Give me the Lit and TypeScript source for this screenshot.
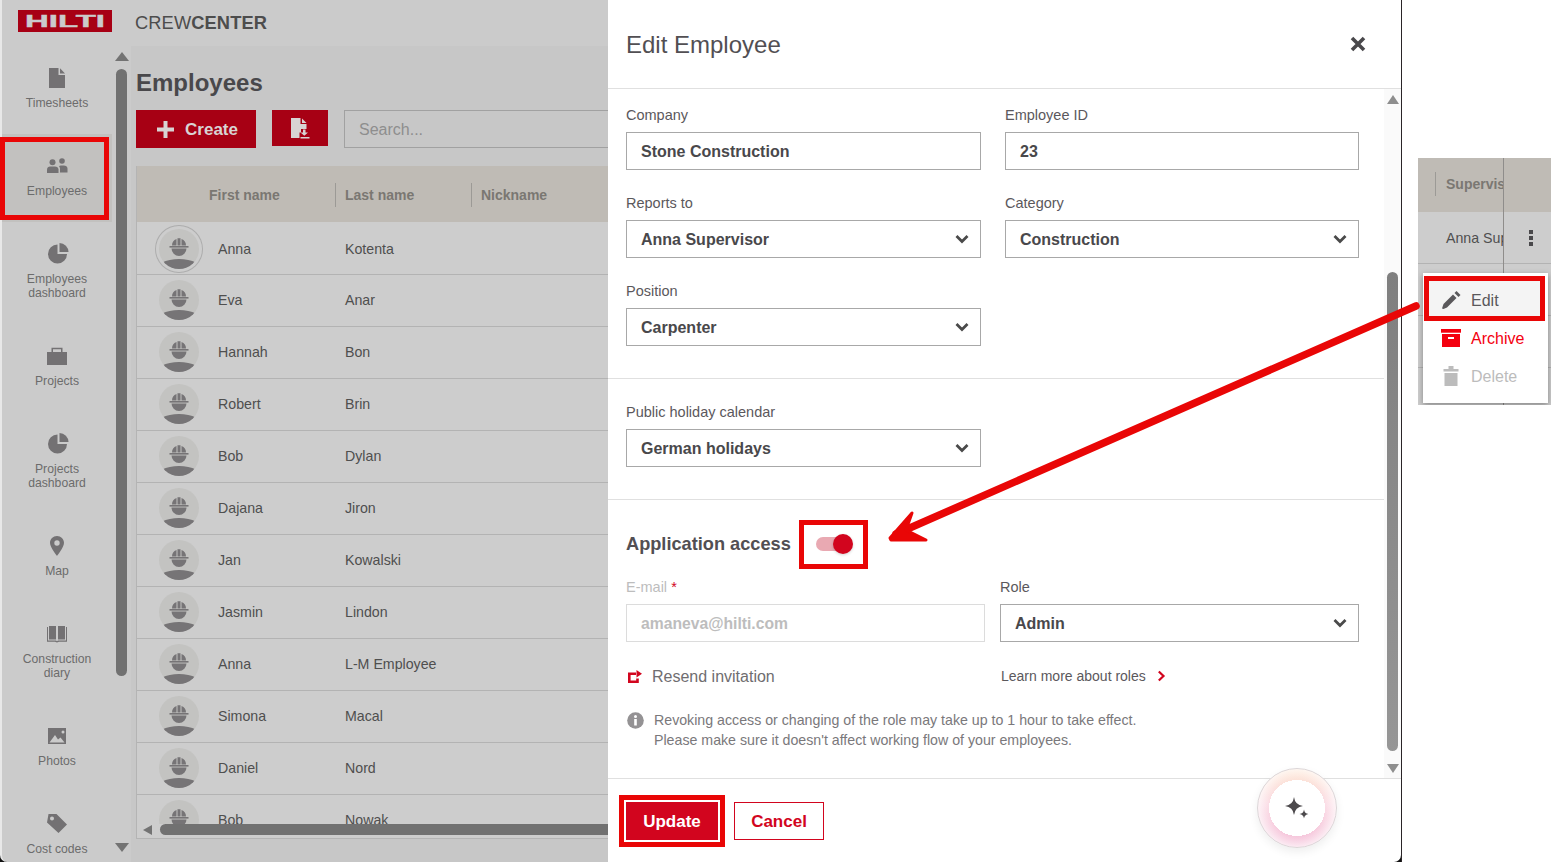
import { LitElement, html, css, svg } from "lit";
import { customElement } from "lit/decorators.js";

const pie = svg`<path d="M12.500 2.500A9.500 9.500 0 1 0 22 12h-9.500z"/><path d="M14.500 1v9h9a9 9 0 0 0-9-9z"/>`;
const icons: Record<string, unknown> = {
  file: svg`<path d="M4 2h9.500v7H20v13H4z"/><path d="M15 2.200 20 7.500h-5z"/>`,
  people: svg`<circle cx="7.500" cy="8.300" r="3"/><circle cx="17" cy="7" r="2.800"/><path d="M2 19v-3.500c0-1.800 1.500-3 3-3h5c1.800 0 3.500 1.200 3.500 3V19z"/><path d="M15 18.500v-3.700c0-1-.4-2-1-2.600.4-.4 1-.7 1.800-.7h3c2 0 3.700 1.200 3.700 3v4z"/>`,
  pie,
  case: svg`<path d="M8 8V5.200h8V8h1.500V3.800h-11V8z"/><rect x="2" y="8" width="20" height="13"/>`,
  pin: svg`<path fill-rule="evenodd" d="M12 2c-3.900 0-7 3-7 6.800C5 13.500 12 22 12 22s7-8.500 7-13.200C19 5 15.900 2 12 2zm0 4.300a2.700 2.700 0 1 1 0 5.400 2.700 2.700 0 0 1 0-5.400z"/>`,
  book: svg`<path d="M4 4h7v13.500H4z"/><path d="M13 4h7v13.500h-7z"/><path d="M2 5h1v13.500h8l1 .8 1-.8h8V5h1v14.800h-8l-2 .7-2-.7H2z"/>`,
  photo: svg`<path fill-rule="evenodd" d="M3 4h18v16H3zM18 6.500a1.500 1.500 0 1 0 0 3 1.500 1.500 0 0 0 0-3zM4.500 18.500h15l-4-5-2.500 2-3-4.500z"/>`,
  tag: svg`<path fill-rule="evenodd" d="M3.500 2h8L22 12.500 13.500 21 2 10.500zM7 4.500a2 2 0 1 0 0 4 2 2 0 0 0 0-4z"/>`,
};

const nav = [
  { icon: "file", label: ["Timesheets"] },
  { icon: "people", label: ["Employees"], active: true },
  { icon: "pie", label: ["Employees", "dashboard"] },
  { icon: "case", label: ["Projects"] },
  { icon: "pie", label: ["Projects", "dashboard"] },
  { icon: "pin", label: ["Map"] },
  { icon: "book", label: ["Construction", "diary"] },
  { icon: "photo", label: ["Photos"] },
  { icon: "tag", label: ["Cost codes"] },
];

const people = [
  ["Anna", "Kotenta"], ["Eva", "Anar"], ["Hannah", "Bon"], ["Robert", "Brin"],
  ["Bob", "Dylan"], ["Dajana", "Jiron"], ["Jan", "Kowalski"], ["Jasmin", "Lindon"],
  ["Anna", "L-M Employee"], ["Simona", "Macal"], ["Daniel", "Nord"], ["Bob", "Nowak"],
];

const chevron = html`<svg class="chev" viewBox="0 0 14 10" width="14" height="10"><path d="M1.500 2 7 7.500 12.500 2" fill="none" stroke="#4a4a4a" stroke-width="2.800"/></svg>`;

@customElement("app-root")
export class AppRoot extends LitElement {
  static styles = css`
    :host { display: block; width: 1551px; height: 862px; position: relative; overflow: hidden; background: #fff;
      font-family: "Liberation Sans", Arial, sans-serif; color: #524f53; }
    * { box-sizing: border-box; }
    .stage { display: flex; width: 1551px; height: 862px; }
    .window { display: flex; width: 1402px; height: 862px; background: #111; border-right: 1px solid #2a2528; }

    .left { width: 608px; height: 862px; overflow: hidden; background: #cbcbcb; border-left: 2px solid #e8e8e8; border-bottom-left-radius: 7px; display: flex; flex-direction: column; color: #4b4b4b; }
    .top { height: 46px; flex: none; display: flex; align-items: center; padding-left: 16px; }
    .logo { width: 94px; height: 22px; display: block; margin-top: -4px; }
    .logo-text { font-weight: 700; font-size: 16.5px; fill: #cbcbcb; stroke: #cbcbcb; stroke-width: .4px; }
    .brand { margin-left: 23px; font-size: 18.300px; color: #4d4d4d; margin-top: -1px; letter-spacing: .1px; }
    .brand b { font-weight: 700; }
    .under { flex: 1; display: flex; min-height: 0; }
    .side { width: 110px; flex: none; overflow: hidden; }
    .item { height: 88px; padding-top: 20px; display: flex; flex-direction: column; align-items: center; font-size: 12.200px; line-height: 14px; color: #6c6c6c; text-align: center; }
    .item.two { height: 102px; }
    .item.on { background: #c2c1bf; }
    .item svg { width: 24px; height: 24px; margin-bottom: 6px; fill: #737173; flex: none; }
    .sb { width: 19px; flex: none; display: flex; flex-direction: column; align-items: center; padding: 6px 0 0 0; }
    .tri-up { width: 0; height: 0; border-left: 7px solid transparent; border-right: 7px solid transparent; border-bottom: 9px solid #737373; }
    .tri-down { width: 0; height: 0; border-left: 7px solid transparent; border-right: 7px solid transparent; border-top: 9px solid #737373; }
    .sb-thumb { width: 11px; height: 607px; margin-top: 8px; background: #717171; border-radius: 6px; }
    .sb .tri-down { margin-top: 167px; }
    .main { flex: 1; min-width: 0; background: #c7c7c7; padding: 23px 0 0 5px; }
    h1 { margin: 0; font-size: 24px; line-height: 28px; font-weight: 700; color: #49484b; }
    .tools { display: flex; align-items: flex-start; margin-top: 13px; height: 38px; }
    .create { width: 120px; height: 38px; flex: none; background: #a70014; color: #d8d3d3; font-weight: 700; font-size: 17px; display: flex; align-items: center; justify-content: center; gap: 11px; padding: 1px 0 0 3px; }
    .create svg { margin-top: -1px; }
    .imp { width: 56px; height: 36px; flex: none; margin-left: 16px; background: #a70014; display: flex; align-items: center; justify-content: center; }
    .search { width: 280px; height: 38px; margin-left: 16px; border: 1px solid #a1a1a1; flex: none; font-size: 16px; color: #8e8e8e; padding: 1px 14px 0; display: flex; align-items: center; }
    .table { position: relative; margin-top: 18px; height: 673px; width: 472px; overflow: hidden; border-left: 1px solid #b4b4b4; border-bottom: 1px solid #b4b4b4; background: #cdcdcd; }
    .thead { height: 56px; padding-top: 2px; background: #bfbbb5; display: grid; grid-template-columns: 198px 136px 136px; font-weight: 700; font-size: 14px; color: #7a7772; align-items: center; }
    .thead span { height: 24px; line-height: 24px; padding-left: 9px; border-left: 1px solid #9c9a96; }
    .thead span:first-child { padding-left: 72px; border: 0; }
    .trow { height: 52px; box-shadow: 0 1px 0 #b3b3b3; display: grid; grid-template-columns: 198px 136px; align-items: center; font-size: 14.200px; color: #4f4f4f; }
    .trow.first { padding-top: 2px; }
    .cell1 { display: flex; align-items: center; padding-left: 22px; gap: 19px; }
    .cell2 { padding-left: 10px; }
    .av { width: 40px; height: 40px; border-radius: 50%; background: #c3c3c1; flex: none; overflow: hidden; }
    .av svg { display: block; width: 40px; height: 40px; fill: #767476; }
    .ring { box-shadow: 0 0 0 3px #cdcdcd, 0 0 0 4px #adadad; }
    .hs { position: absolute; left: 0; right: 0; bottom: 0; height: 14px; background: #cdcdcd; }
    .hs-tri { position: absolute; left: 6px; top: 1px; width: 0; height: 0; border-top: 5.500px solid transparent; border-bottom: 5.500px solid transparent; border-right: 9px solid #737373; }
    .hs-thumb { position: absolute; left: 23px; top: 0; width: 500px; height: 11px; background: #717171; border-radius: 6px; }

    .panel { width: 793px; height: 862px; background: #fff; border-bottom-right-radius: 7px; display: flex; flex-direction: column; overflow: hidden; }
    .phead { height: 89px; flex: none; border-bottom: 1px solid #e0e0e0; display: flex; align-items: center; justify-content: space-between; padding: 2px 35px 0 18px; }
    .phead h2 { margin: 0; font-weight: 400; font-size: 24px; color: #524f53; }
    .close { width: 16px; height: 16px; display: block; margin-top: -2px; }
    .pbody { flex: 1; min-height: 0; display: flex; }
    .form { width: 776px; flex: none; }
    .sec { padding: 17px 0 32px 18px; border-bottom: 1px solid #e0e0e0; }
    .sec + .sec { padding-top: 24px; }
    .sec.last { border: 0; padding-top: 32px; }
    .grid { display: grid; grid-template-columns: 355px 354px; column-gap: 24px; row-gap: 24px; }
    .grid2 { display: grid; grid-template-columns: 359px 359px; column-gap: 15px; margin-top: 22px; }
    label, .lab { display: block; font-size: 14.500px; line-height: 18px; color: #5b585c; margin-bottom: 8px; }
    .lab.off { color: #bdbdbd; }
    .lab i { color: #d2051e; font-style: normal; }
    .box { height: 38px; border: 1px solid #a8a8a8; padding: 1px 15px 0 14px; font-weight: 700; font-size: 16px; color: #49484b; display: flex; align-items: center; justify-content: space-between; }
    .box.off { border-color: #dcdcdc; color: #bdbdbd; font-size: 15.700px; }
    .chev { flex: none; margin: -1px -4px 0 0; }
    .access { display: flex; align-items: center; height: 24px; font-size: 18.200px; font-weight: 700; color: #524f53; }
    .tog { position: relative; width: 32px; height: 14px; margin-left: 25px; background: #e9a9b2; border-radius: 7px; }
    .knob { position: absolute; right: -5px; top: -3px; width: 20px; height: 20px; border-radius: 50%; background: #d2051e; box-shadow: 0 1px 3px rgba(0,0,0,.18); }
    .links { display: grid; grid-template-columns: 359px 359px; column-gap: 15px; margin-top: 23px; height: 24px; align-items: center; }
    .resend { display: flex; align-items: center; gap: 10px; font-size: 16px; color: #6f6d70; padding-left: 2px; }
    .learn { display: flex; align-items: center; gap: 11px; font-size: 14px; color: #5b585c; padding: 0 0 2px 1px; }
    .note { display: flex; margin-top: 21px; gap: 10px; font-size: 14.200px; line-height: 20px; color: #7a787b; padding-left: 1px; }
    .note svg { flex: none; margin-top: 2px; }
    .vsb { flex: 1; background: #fafafa; display: flex; flex-direction: column; align-items: center; padding-top: 6px; }
    .vsb .tri-up, .vsb .tri-down { border-left-width: 6.500px; border-right-width: 6.500px; }
    .vsb .tri-up { border-bottom-color: #8e8e8e; }
    .vsb .tri-down { border-top-color: #8e8e8e; margin-top: 13px; }
    .vthumb { width: 11px; height: 479px; margin-top: 168px; border-radius: 6px; background: linear-gradient(#7f7f7f, #969696); }
    .pfoot { height: 84px; flex: none; border-top: 1px solid #e0e0e0; display: flex; align-items: flex-start; padding: 23px 0 0 18px; position: relative; }
    .btn { height: 38px; font-size: 17px; font-weight: 700; display: flex; align-items: center; justify-content: center; padding-top: 1px; }
    .update { width: 92px; background: #d2051e; color: #fff; }
    .cancel { width: 90px; margin-left: 16px; border: 1px solid #d2051e; color: #d2051e; }
    .fab { position: absolute; left: 649px; top: -11px; width: 80px; height: 80px; border-radius: 50%; border: 1px solid #dcd6d8; background:
        radial-gradient(circle at 50% 50%, #fff 0 28px, transparent 28px),
        radial-gradient(circle at 50% 50%, transparent 28px, rgba(255,255,255,.75) 40px),
        linear-gradient(#fde4d2, #fbdde6 45%, #f4bfd8);
      box-shadow: 0 4px 10px rgba(0,0,0,.07); display: flex; align-items: center; justify-content: center; }

    .right { flex: 1; padding: 158px 0 0 16px; }
    .rt { width: 133px; height: 247px; background: #cdcdcd; position: relative; overflow: hidden; }
    .rhead { height: 54px; background: #bfbbb5; display: flex; align-items: center; padding: 0 0 2px 17px; }
    .rhead span { width: 68px; height: 24px; line-height: 24px; padding-left: 10px; border-left: 1px solid #9c9a96; font-weight: 700; font-size: 14px; color: #7a7772; overflow: hidden; white-space: nowrap; flex: none; }
    .rrow { height: 52px; border-bottom: 1px solid #b3b3b3; display: flex; align-items: center; font-size: 14.200px; color: #4f4f4f; }
    .rname { width: 85px; padding-left: 28px; overflow: hidden; white-space: nowrap; flex: none; }
    .kebab { margin-left: 26px; display: flex; flex-direction: column; gap: 2px; }
    .kebab b { width: 4px; height: 4px; background: #49484b; display: block; }
    .vline { position: absolute; left: 85px; top: 0; bottom: 0; width: 1px; background: #8f8d8b; }
    .menu { position: absolute; left: 5px; top: 115px; width: 125px; height: 130px; background: #fff; padding: 8px 0 0 5px; box-shadow: 0 2px 6px rgba(0,0,0,.35); }
    .mi { height: 38px; width: 115px; display: flex; align-items: center; padding: 2px 0 0 13px; font-size: 16px; color: #5a585b; }
    .mi span { margin-left: 10px; }
    .mi.sel { background: #f4f4f4; }
    .mi.arch { color: #f4000f; }
    .mi.del { color: #bcbcbc; }
    .mi svg { flex: none; width: 20px; height: 20px; margin-top: -2px; }

    .mark { position: absolute; border: 5px solid #e90606; pointer-events: none; }
    .m-emp { left: 0; top: 137px; width: 109px; height: 83px; }
    .m-tog { left: 799px; top: 520px; width: 69px; height: 49px; }
    .m-upd { left: 619px; top: 795px; width: 106px; height: 52px; }
    .m-edit { left: 1424px; top: 276px; width: 121px; height: 45px; }
    .arrow { position: absolute; left: 0; top: 0; width: 1551px; height: 862px; pointer-events: none; }
  `;

  private avatar(ring = false) {
    return html`<div class="av ${ring ? "ring" : ""}"><svg viewBox="0 0 40 40">
      <path d="M13 16.500a7 7 0 0 1 4.500-6.500v6.500zM18.500 16.500V9.200h3v7.300zM22.500 16.500V10a7 7 0 0 1 4.500 6.500z"/>
      <rect x="10.500" y="17" width="19" height="1.600"/>
      <path d="M12.500 19.500h15a7.500 7.500 0 0 1-15 0z"/>
      <ellipse cx="20" cy="42" rx="24" ry="12"/>
    </svg></div>`;
  }

  render() {
    return html`
      <div class="stage">
        <div class="window">
          <div class="left">
            <div class="top">
              <svg class="logo" viewBox="0 0 94 22"><rect width="94" height="22" fill="#a70014"/><text class="logo-text" x="7" y="17" textLength="80" lengthAdjust="spacingAndGlyphs">HILTI</text></svg>
              <div class="brand">CREW<b>CENTER</b></div>
            </div>
            <div class="under">
              <div class="side">
                ${nav.map(n => html`<div class="item ${n.label.length > 1 ? "two" : ""} ${n.active ? "on" : ""}">
                  <svg viewBox="0 0 24 24">${icons[n.icon]}</svg>
                  ${n.label.map(l => html`<div>${l}</div>`)}
                </div>`)}
              </div>
              <div class="sb"><div class="tri-up"></div><div class="sb-thumb"></div><div class="tri-down"></div></div>
              <div class="main">
                <h1>Employees</h1>
                <div class="tools">
                  <div class="create"><svg width="17" height="17" viewBox="0 0 17 17"><path d="M6.500 0h4v6.500H17v4h-6.500V17h-4v-6.500H0v-4h6.500z" fill="#d8d3d3"/></svg>Create</div>
                  <div class="imp"><svg width="20" height="22" viewBox="0 0 20 22" fill="#d8d3d3"><path d="M1 1h9.500v6h6v5h-5.500v3.500H9.500V21H1z"/><path d="M12 1.500l4.500 4.500H12z"/><path d="M13 12.500h2.500v3H18l-3.700 3.200-3.800-3.200H13z"/><rect x="10.500" y="20" width="9" height="1.500"/></svg></div>
                  <div class="search">Search...</div>
                </div>
                <div class="table">
                  <div class="thead"><span>First name</span><span>Last name</span><span>Nickname</span></div>
                  ${people.map((p, i) => html`<div class="trow ${i === 0 ? "first" : ""}"><div class="cell1">${this.avatar(i === 0)}<span>${p[0]}</span></div><div class="cell2">${p[1]}</div></div>`)}
                  <div class="hs"><div class="hs-tri"></div><div class="hs-thumb"></div></div>
                </div>
              </div>
            </div>
          </div>

          <div class="panel">
            <div class="phead"><h2>Edit Employee</h2>
              <svg class="close" viewBox="0 0 16 16"><path d="M2 2l12 12M14 2 2 14" stroke="#49484b" stroke-width="3.600" fill="none"/></svg>
            </div>
            <div class="pbody">
              <div class="form">
                <div class="sec"><div class="grid">
                  <div><label>Company</label><div class="box">Stone Construction</div></div>
                  <div><label>Employee ID</label><div class="box">23</div></div>
                  <div><label>Reports to</label><div class="box">Anna Supervisor${chevron}</div></div>
                  <div><label>Category</label><div class="box">Construction${chevron}</div></div>
                  <div><label>Position</label><div class="box">Carpenter${chevron}</div></div>
                </div></div>
                <div class="sec"><div class="grid">
                  <div><label>Public holiday calendar</label><div class="box">German holidays${chevron}</div></div>
                </div></div>
                <div class="sec last">
                  <div class="access">Application access<div class="tog"><div class="knob"></div></div></div>
                  <div class="grid2">
                    <div><div class="lab off">E-mail <i>*</i></div><div class="box off">amaneva@hilti.com</div></div>
                    <div><div class="lab">Role</div><div class="box">Admin${chevron}</div></div>
                  </div>
                  <div class="links">
                    <div class="resend"><svg width="14" height="14" viewBox="0 0 14 14"><path d="M8 3.700H1.300v8h8.200V8.500" fill="none" stroke="#d2051e" stroke-width="2.600"/><path d="M8.500 0 14 3.700 8.500 7.400z" fill="#d2051e"/></svg>Resend invitation</div>
                    <div class="learn">Learn more about roles<svg width="9" height="12" viewBox="0 0 9 12"><path d="M1.800 1.500 6.500 6l-4.700 4.500" fill="none" stroke="#d2051e" stroke-width="2.200"/></svg></div>
                  </div>
                  <div class="note"><svg width="17" height="17" viewBox="0 0 17 17"><circle cx="8.500" cy="8.500" r="8.300" fill="#949294"/><rect x="7.200" y="7" width="2.600" height="6.500" fill="#fff"/><circle cx="8.500" cy="4.600" r="1.500" fill="#fff"/></svg>
                    <div>Revoking access or changing of the role may take up to 1 hour to take effect.<br>Please make sure it doesn't affect working flow of your employees.</div></div>
                </div>
              </div>
              <div class="vsb"><div class="tri-up"></div><div class="vthumb"></div><div class="tri-down"></div></div>
            </div>
            <div class="pfoot">
              <div class="btn update">Update</div><div class="btn cancel">Cancel</div>
              <div class="fab"><svg width="26" height="26" viewBox="0 0 26 26" fill="#4d4a4d"><path d="M10 2Q11 10 19 11 11 12 10 20 9 12 1 11 9 10 10 2z"/><path d="M20 14.500Q20.500 18.500 24.500 19 20.500 19.500 20 23.500 19.500 19.500 15.500 19 19.500 18.500 20 14.500z"/></svg></div>
            </div>
          </div>
        </div>

        <div class="right">
          <div class="rt">
            <div class="rhead"><span>Supervisor</span></div>
            <div class="rrow"><div class="rname">Anna Supervisor</div><div class="kebab"><b></b><b></b><b></b></div></div>
            <div class="rrow"></div><div class="rrow"></div>
            <div class="vline"></div>
            <div class="menu">
              <div class="mi sel"><svg viewBox="0 0 20 20" fill="#5a585b"><path d="M2.500 19l-1.500-.5 1.500-4.500L12 4.500l3.500 3.500L6 17.500z"/><path d="M13.500 3 15.500 1l4 4-2 2z"/></svg><span>Edit</span></div>
              <div class="mi arch"><svg viewBox="0 0 20 20" fill="#f4000f"><rect x="0" y="1" width="20" height="3.700"/><path fill-rule="evenodd" d="M1 6h18v13H1zM7 9v2h6V9z"/></svg><span>Archive</span></div>
              <div class="mi del"><svg viewBox="0 0 20 20" fill="#bcbcbc"><path d="M2.500 3h5V0h5v3h5v2.500h-15z"/><rect x="3.500" y="7" width="13" height="13"/></svg><span>Delete</span></div>
            </div>
          </div>
        </div>
      </div>

      <svg class="arrow" viewBox="0 0 1551 862">
        <path d="M1416 306 896 534" stroke="#e90606" stroke-width="7.500" stroke-linecap="round" fill="none"/>
        <path d="M890 538 912 513 906 530 926 540 891 540z" fill="#e90606" stroke="#e90606" stroke-width="3" stroke-linejoin="round"/>
      </svg>
      <div class="mark m-emp"></div><div class="mark m-tog"></div><div class="mark m-upd"></div><div class="mark m-edit"></div>
    `;
  }
}
